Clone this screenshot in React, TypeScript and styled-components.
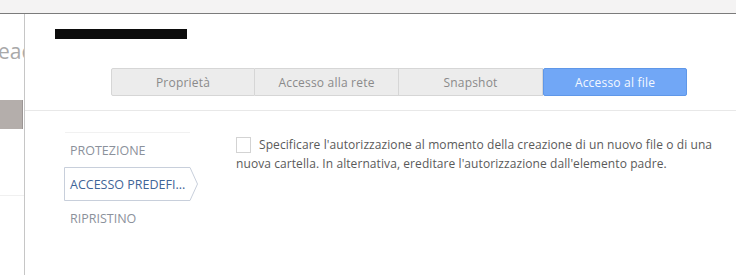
import React from "react";
import styled, { createGlobalStyle } from "styled-components";

const Global = createGlobalStyle`
  html, body { margin: 0; padding: 0; background: #ffffff; }
  body { font-family: "Open Sans", "DejaVu Sans", sans-serif; width: 736px; height: 275px; overflow: hidden; }
  * { box-sizing: border-box; }
`;

const Page = styled.div`
  width: 736px;
  height: 275px;
  display: flex;
  flex-direction: column;
  overflow: hidden;
`;

const TopBar = styled.div`
  height: 14px;
  flex: none;
  background: #f4f3f3;
  border-bottom: 1px solid #7b7b7b;
`;

const Body = styled.div`
  flex: 1;
  display: flex;
  min-height: 0;
`;

const LeftStrip = styled.div`
  width: 25px;
  flex: none;
  border-right: 1px solid #c6c6c6;
  display: flex;
  flex-direction: column;
  overflow: hidden;
`;

const GhostTitle = styled.div`
  margin: 22px 0 0 -2px;
  height: 30px;
  font-size: 21px;
  line-height: 30px;
  color: #a9a9a9;
  white-space: nowrap;
  font-family: "Open Sans", sans-serif;
`;

const GhostBlock = styled.div`
  margin-top: 34px;
  width: 23px;
  height: 29px;
  background: #b4aeab;
  border-right: 1px solid #9c9695;
`;

const GhostRule = styled.div`
  margin-top: 66px;
  height: 1px;
  background: #f0f0f0;
`;

const Dialog = styled.div`
  flex: 1;
  display: flex;
  flex-direction: column;
  background: #ffffff;
`;

const Redacted = styled.div`
  margin: 15px 0 0 30px;
  width: 132px;
  height: 10px;
  background: #0c0c0c;
`;

const Tabs = styled.div`
  margin: 29px 0 0 86px;
  display: flex;
  height: 28px;
`;

const Tab = styled.div<{ $active?: boolean }>`
  width: 144px;
  height: 28px;
  display: flex;
  align-items: center;
  justify-content: center;
  font-size: 12px;
  letter-spacing: 0.2px;
  color: ${(p) => (p.$active ? "#f4f8ff" : "#8a8a8a")};
  background: ${(p) => (p.$active ? "#71a7f6" : "#ececec")};
  border: 1px solid ${(p) => (p.$active ? "#5f97e8" : "#d6d6d6")};
  border-left-width: ${(p) => (p.$active ? "1px" : "0")};
  &:first-child {
    border-left-width: 1px;
    border-radius: 2px 0 0 2px;
  }
  &:last-child {
    border-radius: 2px;
  }
`;

const Divider = styled.div`
  margin-top: 14px;
  height: 1px;
  background: #e8e8e8;
`;

const Main = styled.div`
  display: flex;
  padding-left: 39px;
`;

const Nav = styled.div`
  margin-top: 21px;
  width: 134px;
  display: flex;
  flex-direction: column;
  &::before {
    content: "";
    display: block;
    margin-left: 1px;
    width: 125px;
    height: 1px;
    background: #f1f1f1;
  }
`;

const NavItem = styled.div<{ $active?: boolean }>`
  position: relative;
  height: 34px;
  display: flex;
  align-items: center;
  padding-left: 6px;
  font-size: 12.5px;
  letter-spacing: 0;
  color: ${(p) => (p.$active ? "#3f6598" : "#8b919b")};
  white-space: nowrap;
`;

const NavLabel = styled.span`
  position: relative;
`;

const ArrowOutline = styled.svg`
  position: absolute;
  left: 0;
  top: 0;
  width: 134px;
  height: 34px;
`;

const Content = styled.div`
  margin: 24px 0 0 38px;
`;

const Para = styled.div`
  font-size: 12px;
  letter-spacing: 0.08px;
  line-height: 19px;
  color: #5a5a5a;
  white-space: nowrap;
`;

const Check = styled.span`
  display: inline-block;
  width: 15px;
  height: 16px;
  border: 1px solid #d3d3d3;
  background: #ffffff;
  margin-right: 8px;
  vertical-align: -4px;
`;

export default function App() {
  return (
    <Page>
      <Global />
      <TopBar />
      <Body>
        <LeftStrip>
          <GhostTitle>eac</GhostTitle>
          <GhostBlock />
          <GhostRule />
        </LeftStrip>
        <Dialog>
          <Redacted />
          <Tabs>
            <Tab>Proprietà</Tab>
            <Tab>Accesso alla rete</Tab>
            <Tab>Snapshot</Tab>
            <Tab $active>Accesso al file</Tab>
          </Tabs>
          <Divider />
          <Main>
            <Nav>
              <NavItem>PROTEZIONE</NavItem>
              <NavItem $active>
                <ArrowOutline viewBox="0 0 134 34">
                  <polygon
                    points="0.5,0.5 126,0.5 133.5,17 126,33.5 0.5,33.5"
                    fill="#ffffff"
                    stroke="#c8cfdb"
                    strokeWidth="1"
                  />
                </ArrowOutline>
                <NavLabel>ACCESSO PREDEFI...</NavLabel>
              </NavItem>
              <NavItem>RIPRISTINO</NavItem>
            </Nav>
            <Content>
              <Para>
                <Check />
                Specificare l'autorizzazione al momento della creazione di un nuovo file o di una
                <br />
                nuova cartella. In alternativa, ereditare l'autorizzazione dall'elemento padre.
              </Para>
            </Content>
          </Main>
        </Dialog>
      </Body>
    </Page>
  );
}
